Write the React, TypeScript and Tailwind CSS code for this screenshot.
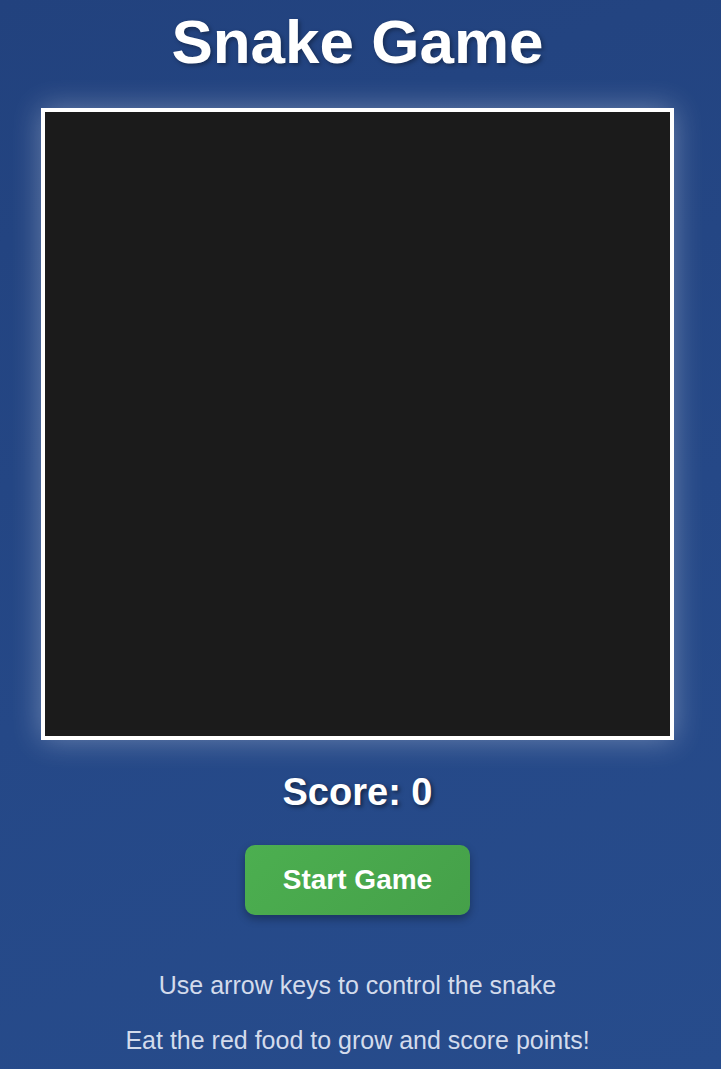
export default function App() {
  return (
    <div
      className="min-h-[1069px] w-full flex flex-col items-center pr-[6px] bg-[linear-gradient(160deg,#22427e_0%,#254887_55%,#274c8c_100%)] text-white"
      style={{ fontFamily: '"Liberation Sans", Arial, sans-serif' }}
    >
      <h1 className="mt-[11px] text-[62px] leading-none font-bold [text-shadow:2px_2px_4px_rgba(0,0,0,0.35)]">
        Snake Game
      </h1>

      <div className="mt-[35px] w-[633px] h-[632px] border-4 border-white bg-[#1b1b1b] shadow-[0_0_28px_rgba(255,255,255,0.32)]" />

      <div className="mt-[33px] text-[38px] leading-none font-bold [text-shadow:2px_2px_4px_rgba(0,0,0,0.5)]">
        Score: 0
      </div>

      <button className="mt-[34px] w-[225px] h-[70px] rounded-[10px] bg-[linear-gradient(135deg,#4caf50,#45a049)] text-[28px] leading-none font-bold text-white shadow-[0_4px_8px_rgba(0,0,0,0.3)]">
        Start Game
      </button>

      <div className="mt-[58px] flex flex-col items-center gap-[30px] text-[25px] leading-none text-[#d3dbec]">
        <p>Use arrow keys to control the snake</p>
        <p>Eat the red food to grow and score points!</p>
      </div>
    </div>
  );
}
